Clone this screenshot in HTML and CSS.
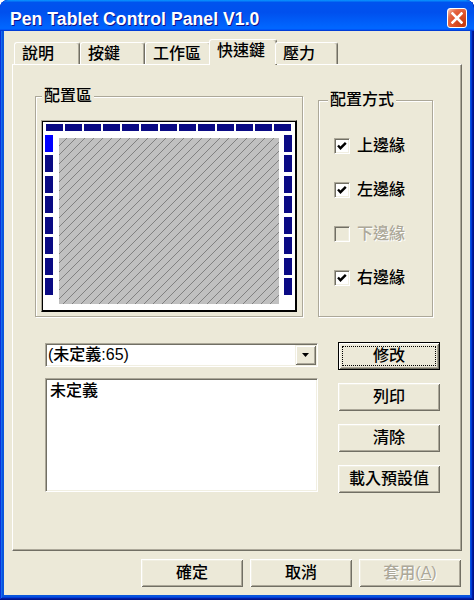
FILE: index.html
```html
<!DOCTYPE html>
<html>
<head>
<meta charset="utf-8">
<title>Pen Tablet Control Panel V1.0</title>
<link rel="stylesheet" href="styles.css">
</head>
<body>
<div class="window">
  <div class="titlebar">
    <span class="title">Pen Tablet Control Panel V1.0</span>
    <span class="close"><svg width="12" height="12" viewBox="0 0 12 12"><path d="M1.5 1.5 L10.5 10.5 M10.5 1.5 L1.5 10.5" stroke="#fff" stroke-width="2.6" stroke-linecap="square"/></svg></span>
  </div>
  <div class="client">
    <div class="tabs">
      <div class="tab t1">說明</div>
      <div class="tab t2">按鍵</div>
      <div class="tab t3">工作區</div>
      <div class="tab t4 active">快速鍵</div>
      <div class="tab t5">壓力</div>
    </div>
    <div class="pane">
      <div class="top">
        <div class="group g1">
          <div class="legend l1">配置區</div>
          <div class="tablet">
            <div class="tablet-inner">
              <div class="toprow">
                <i class="hs"></i><i class="hs"></i><i class="hs"></i><i class="hs"></i><i class="hs"></i><i class="hs"></i><i class="hs"></i><i class="hs"></i><i class="hs"></i><i class="hs"></i><i class="hs"></i><i class="hs"></i><i class="hs"></i>
              </div>
              <div class="mid">
                <div class="col">
                  <i class="vs on"></i><i class="vs"></i><i class="vs"></i><i class="vs"></i><i class="vs"></i><i class="vs"></i><i class="vs"></i><i class="vs"></i>
                </div>
                <div class="hatch"></div>
                <div class="col">
                  <i class="vs"></i><i class="vs"></i><i class="vs"></i><i class="vs"></i><i class="vs"></i><i class="vs"></i><i class="vs"></i><i class="vs"></i>
                </div>
              </div>
            </div>
          </div>
        </div>
        <div class="group g2">
          <div class="legend l2">配置方式</div>
          <div class="checks">
            <div class="chk"><span class="box"><svg width="14" height="14" viewBox="0 0 14 14"><polyline points="3,6.5 5.5,9.2 10.8,3.8" fill="none" stroke="#000" stroke-width="2.4"/></svg></span><span>上邊緣</span></div>
            <div class="chk"><span class="box"><svg width="14" height="14" viewBox="0 0 14 14"><polyline points="3,6.5 5.5,9.2 10.8,3.8" fill="none" stroke="#000" stroke-width="2.4"/></svg></span><span>左邊緣</span></div>
            <div class="chk disabled"><span class="box"></span><span>下邊緣</span></div>
            <div class="chk"><span class="box"><svg width="14" height="14" viewBox="0 0 14 14"><polyline points="3,6.5 5.5,9.2 10.8,3.8" fill="none" stroke="#000" stroke-width="2.4"/></svg></span><span>右邊緣</span></div>
          </div>
        </div>
      </div>
      <div class="bottom">
        <div class="leftcol">
          <div class="combo">
            <span class="ctext">(未定義:65)</span>
            <span class="drop"><svg width="7" height="4" viewBox="0 0 7 4"><polygon points="0,0 7,0 3.5,4" fill="#000"/></svg></span>
          </div>
          <div class="list">未定義</div>
        </div>
        <div class="btns">
          <div class="btn default"><span class="focus">修改</span></div>
          <div class="btn">列印</div>
          <div class="btn">清除</div>
          <div class="btn">載入預設值</div>
        </div>
      </div>
    </div>
    <div class="footer">
      <div class="btn">確定</div>
      <div class="btn">取消</div>
      <div class="btn disabled">套用(<u>A</u>)</div>
    </div>
  </div>
</div>
</body>
</html>
```

FILE: styles.css
```css
* { box-sizing: border-box; }
html, body { margin: 0; padding: 0; background: #fff; }
body {
  font-family: "Liberation Sans", "Noto Sans CJK TC", sans-serif;
  font-size: 16px;
  font-weight: 500;
  color: #000;
}
.window {
  width: 474px;
  height: 600px;
  background: #0855dd;
  border-radius: 8px 8px 0 0;
  box-shadow: inset -1px -1px #00138c, inset 1px 1px #0831d9, inset -2px -2px #001ea0, inset 2px 2px #166aee, inset -3px -3px #003bda, inset 3px 3px #0855dd;
  display: flex;
  flex-direction: column;
  overflow: hidden;
}
.titlebar {
  height: 31px;
  flex: none;
  display: flex;
  align-items: flex-start;
  justify-content: space-between;
  padding: 0 7px 0 10px;
  border-radius: 8px 8px 0 0;
  background: linear-gradient(180deg, #0997ff, #0053ee 8%, #0050ee 40%, #0066ff 88%, #0066ff 93%, #005bff 95%, #003dd7 96%, #003dd7);
}
.title {
  margin-top: 9px;
  color: #fff;
  font-family: "Liberation Sans", sans-serif;
  font-weight: bold;
  font-size: 17.6px;
  line-height: 20px;
  letter-spacing: 0.05px;
  text-shadow: 1px 1px 0 #0f1089;
  white-space: nowrap;
}
.close {
  margin-top: 8px;
  width: 20px;
  height: 20px;
  border: 1px solid #fff;
  border-radius: 3px;
  background: radial-gradient(circle at 85% 85%, #c23a10 0%, #e0532c 50%, #e46a47 72%, #f5b39c 92%, #fff 100%);
  display: flex;
  align-items: center;
  justify-content: center;
}
.client {
  flex: 1;
  margin: 0 4px 5px;
  background: #ece9d8;
  padding: 8px 8px 0;
  display: flex;
  flex-direction: column;
}
/* tabs */
.tabs {
  height: 25px;
  margin-left: 2px;
  display: flex;
  align-items: flex-end;
  position: relative;
  z-index: 1;
}
.tab {
  height: 22px;
  background: #ece9d8;
  border-top: 1px solid #fff;
  border-left: 1px solid #fff;
  border-right: 1px solid #716f64;
  box-shadow: inset -1px 0 #aca899;
  border-radius: 3px 3px 0 0;
  padding: 2px 0 0 7px;
  line-height: 18px;
  white-space: nowrap;
}
.t1 { width: 66px; }
.t2 { width: 65px; }
.t3 { width: 66px; }
.t4 { width: 68px; }
.t5 { width: 63px; }
.tab.active {
  height: 26px;
  margin: 0 -2px -1px;
}
.pane {
  height: 487px;
  border: 1px solid;
  border-color: #fff #716f64 #716f64 #fff;
  box-shadow: inset -1px -1px #aca899;
  padding: 31px 0 0 22px;
}
.top {
  display: flex;
  align-items: flex-start;
  gap: 15px;
}
.group {
  border: 1px solid #aca899;
  box-shadow: inset 1px 1px #fff, 1px 1px #fff;
}
.g1 { width: 268px; height: 221px; padding: 0 5px; }
.g2 { width: 115px; height: 217px; margin-top: 4px; }
.legend {
  width: fit-content;
  margin-top: -10px;
  padding: 0 2px;
  line-height: 18px;
  background: #ece9d8;
}
.l1 { margin-left: 1px; }
.l2 { margin-left: 9px; }
/* tablet */
.tablet {
  margin-top: 15px;
  width: 256px;
  height: 192px;
  border: 1px solid;
  border-color: #aca899 #000 #000 #aca899;
}
.tablet-inner {
  height: 100%;
  border: 1px solid #000;
  background: #fff;
  padding: 2px 0 0 2px;
}
.toprow {
  display: flex;
  gap: 2px;
  margin-left: 1px;
}
.hs {
  display: block;
  width: 17px;
  height: 7px;
  background: #0a0a84;
}
.mid {
  display: flex;
  align-items: flex-start;
  margin-top: 4px;
}
.col {
  width: 8px;
  height: 160px;
  display: flex;
  flex-direction: column;
  justify-content: space-between;
}
.vs {
  display: block;
  width: 8px;
  height: 17px;
  background: #0a0a84;
}
.vs.on { background: #0000ff; }
.hatch {
  width: 220px;
  height: 166px;
  margin: 3px 5px 0 6px;
  background: repeating-linear-gradient(135deg, #c0c0c0 0, #c0c0c0 5.4px, #808080 5.4px, #808080 6.36px);
}
/* checkboxes */
.checks {
  margin-top: 29px;
  padding-left: 15px;
  display: flex;
  flex-direction: column;
  gap: 28px;
}
.chk {
  display: flex;
  align-items: center;
  gap: 7px;
  height: 16px;
  line-height: 16px;
}
.box {
  width: 16px;
  height: 16px;
  border: 1px solid;
  border-color: #aca899 #fff #fff #aca899;
  box-shadow: inset 1px 1px #716f64, inset -1px -1px #f1efe2;
  background: #fff;
  display: flex;
}
.chk.disabled { color: #aca899; text-shadow: 1px 1px 0 #fff; }
.chk.disabled .box { background: #ece9d8; }
/* bottom section */
.bottom {
  display: flex;
  align-items: flex-start;
  margin-top: 25px;
  gap: 20px;
}
.leftcol {
  margin-left: 10px;
  width: 273px;
}
.combo {
  margin-top: 1px;
  height: 24px;
  border: 1px solid;
  border-color: #aca899 #fff #fff #aca899;
  box-shadow: inset 1px 1px #716f64, inset -1px -1px #f1efe2;
  padding: 1px;
  background: #fff;
  display: flex;
  align-items: center;
}
.ctext {
  flex: 1;
  padding-left: 1px;
  line-height: 18px;
}
.drop {
  width: 21px;
  height: 20px;
  background: #ece9d8;
  box-shadow: inset 1px 1px #f1efe2, inset -1px -1px #716f64, inset 2px 2px #fff, inset -2px -2px #aca899;
  display: flex;
  align-items: center;
  justify-content: center;
}
.list {
  margin-top: 11px;
  height: 114px;
  border: 1px solid;
  border-color: #aca899 #fff #fff #aca899;
  box-shadow: inset 1px 1px #716f64, inset -1px -1px #f1efe2;
  background: #fff;
  padding: 3px 4px;
  line-height: 18px;
}
.btns {
  display: flex;
  flex-direction: column;
  gap: 13px;
}
.btn {
  width: 102px;
  height: 28px;
  background: #ece9d8;
  box-shadow: inset 1px 1px #fff, inset -1px -1px #716f64, inset 2px 2px #f1efe2, inset -2px -2px #aca899;
  display: flex;
  align-items: center;
  justify-content: center;
  line-height: 18px;
  white-space: nowrap;
}
.btn.default {
  border: 1px solid #000;
  padding: 3px;
  align-items: stretch;
}
.focus {
  flex: 1;
  border: 1px dotted #000;
  display: flex;
  align-items: center;
  justify-content: center;
}
.btn.disabled { color: #aca899; text-shadow: 1px 1px 0 #fff; }
.footer {
  display: flex;
  justify-content: flex-end;
  gap: 7px;
  padding: 8px 1px 0 0;
}
```
